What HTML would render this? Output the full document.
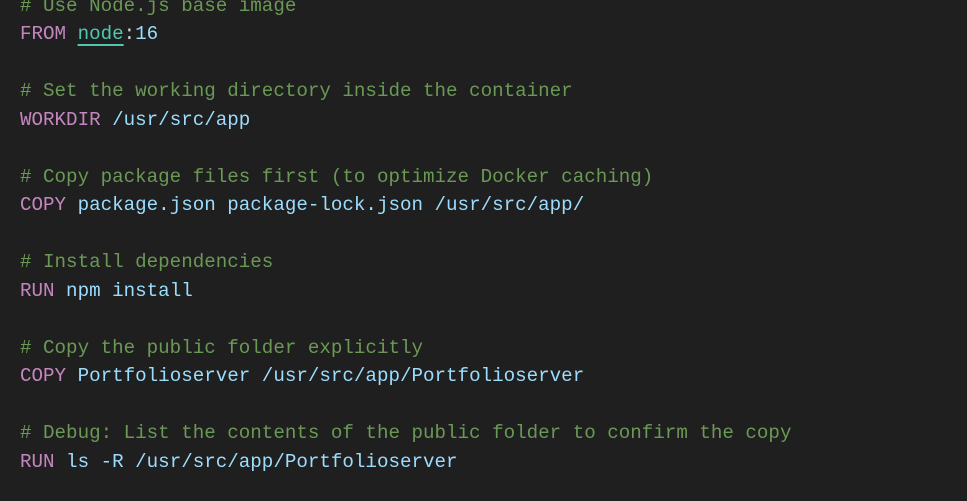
<!DOCTYPE html>
<html><head><style>
html,body{margin:0;padding:0;background:#1f1f1f;width:967px;height:501px;overflow:hidden}
pre{margin:0;position:absolute;left:20px;top:-8.5px;font-family:"Liberation Mono",monospace;font-size:19.2px;line-height:28.5px;color:#9cdcfe}
.c{color:#6a9955}.k{color:#c586c0}.t{color:#4ec9b0;text-decoration:underline;text-underline-offset:5px;text-decoration-thickness:2px}.p{color:#d4d4d4}
</style></head><body>
<pre><span class="c"># Use Node.js base image</span>
<span class="k">FROM</span> <span class="t">node</span><span class="p">:</span>16

<span class="c"># Set the working directory inside the container</span>
<span class="k">WORKDIR</span> /usr/src/app

<span class="c"># Copy package files first (to optimize Docker caching)</span>
<span class="k">COPY</span> package.json package-lock.json /usr/src/app/

<span class="c"># Install dependencies</span>
<span class="k">RUN</span> npm install

<span class="c"># Copy the public folder explicitly</span>
<span class="k">COPY</span> Portfolioserver /usr/src/app/Portfolioserver

<span class="c"># Debug: List the contents of the public folder to confirm the copy</span>
<span class="k">RUN</span> ls -R /usr/src/app/Portfolioserver
</pre>
</body></html>
